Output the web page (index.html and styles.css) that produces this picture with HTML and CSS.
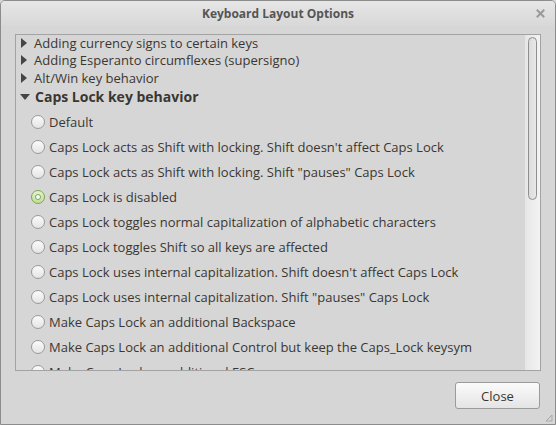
FILE: index.html
```html
<!DOCTYPE html>
<html>
<head>
<meta charset="utf-8">
<link rel="stylesheet" href="styles.css">
</head>
<body>
<div class="window">
  <div class="titlebar">
    <span class="title">Keyboard Layout Options</span>
    <svg class="close-x" width="9" height="9" viewBox="0 0 9 9"><path d="M1.5 1.5 L7.5 7.5 M7.5 1.5 L1.5 7.5" stroke="#9a9a9a" stroke-width="2" stroke-linecap="square"/></svg>
  </div>
  <div class="content">
    <div class="tree">
      <div class="rows">
        <div class="row group"><span class="tri right"></span>Adding currency signs to certain keys</div>
        <div class="row group"><span class="tri right"></span>Adding Esperanto circumflexes (supersigno)</div>
        <div class="row group"><span class="tri right"></span>Alt/Win key behavior</div>
        <div class="row header"><span class="tri down"></span>Caps Lock key behavior</div>
        <div class="row opt"><span class="radio"></span>Default</div>
        <div class="row opt"><span class="radio"></span>Caps Lock acts as Shift with locking. Shift doesn't affect Caps Lock</div>
        <div class="row opt"><span class="radio"></span>Caps Lock acts as Shift with locking. Shift "pauses" Caps Lock</div>
        <div class="row opt"><span class="radio on"></span>Caps Lock is disabled</div>
        <div class="row opt"><span class="radio"></span>Caps Lock toggles normal capitalization of alphabetic characters</div>
        <div class="row opt"><span class="radio"></span>Caps Lock toggles Shift so all keys are affected</div>
        <div class="row opt"><span class="radio"></span>Caps Lock uses internal capitalization. Shift doesn't affect Caps Lock</div>
        <div class="row opt"><span class="radio"></span>Caps Lock uses internal capitalization. Shift "pauses" Caps Lock</div>
        <div class="row opt"><span class="radio"></span>Make Caps Lock an additional Backspace</div>
        <div class="row opt"><span class="radio"></span>Make Caps Lock an additional Control but keep the Caps_Lock keysym</div>
        <div class="row opt"><span class="radio"></span>Make Caps Lock an additional ESC</div>
      </div>
      <div class="scrollbar"><div class="slider"></div></div>
    </div>
    <div class="actions">
      <button class="btn">Close</button>
    </div>
  </div>
  <svg class="grip" width="8" height="8" viewBox="0 0 8 8"><path d="M7 1 L7 7 L1 7 Z" fill="none" stroke="#a8a8a8" stroke-width="1"/></svg>
</div>
</body>
</html>
```
FILE: styles.css
```css
* { box-sizing: border-box; }
html, body { margin: 0; padding: 0; background: #d6d6d6; }
body { font-family: "Open Sans", "Noto Sans", sans-serif; color: #3b3632; }
.window {
  position: relative;
  width: 556px; height: 425px;
  border: 1px solid #8c8c8c;
  border-radius: 5px 5px 0 0;
  background: #d6d6d6;
  display: flex; flex-direction: column;
  overflow: hidden;
}
.titlebar {
  position: relative;
  height: 25px; flex: none;
  background: linear-gradient(#e6e6e6, #d8d8d8);
  display: flex; align-items: center; justify-content: center;
}
.title { font-weight: bold; font-size: 12px; color: #555555; }
.close-x { position: absolute; right: 10px; top: 8px; }
.content { flex: 1; display: flex; flex-direction: column; padding: 8px 14px 0 14px; }
.tree {
  height: 337px;
  border: 1px solid #a3a3a3;
  display: flex;
  overflow: hidden;
  background: #d6d6d6;
}
.rows { flex: 1; overflow: hidden; padding-left: 3px; }
.row { display: flex; align-items: center; font-size: 13px; white-space: nowrap; }
.row.group { height: 17.3px; }
.row.group:first-child { height: 16.8px; }
.row.header { height: 23.5px; font-weight: bold; font-size: 14px; padding-bottom: 3px; }
.row.opt { height: 25px; padding-left: 13px; }
.tri { width: 0; height: 0; }
.tri.right { border-top: 5px solid transparent; border-bottom: 5px solid transparent; border-left: 6px solid #454545; margin-left: 2px; margin-right: 7px; }
.tri.down { border-left: 5px solid transparent; border-right: 5px solid transparent; border-top: 6px solid #454545; margin-left: 1px; margin-right: 5px; }
.radio {
  width: 14px; height: 14px; border-radius: 50%;
  border: 1px solid #9a9a9a;
  background: linear-gradient(#fbfbfb, #e4e4e4);
  margin-left: -1px; margin-right: 4px; flex: none;
  position: relative;
}
.radio.on { border-color: #7aa74a; background: linear-gradient(#e4f2cf, #c2dc9c); }
.radio.on::after {
  content: ""; position: absolute; left: 3px; top: 3px;
  width: 6px; height: 6px; border-radius: 50%;
  background: #fafafa; border: 1px solid #7ea65a; box-sizing: border-box;
}
.scrollbar {
  width: 15px; flex: none;
  background: linear-gradient(90deg, #e6e6e6, #f3f3f3);
  padding: 2px 3px 0 3px;
}
.slider {
  width: 9px; height: 163px;
  border: 1px solid #8e8e8e;
  border-radius: 5px;
  background: linear-gradient(90deg, #dcdcdc, #e8e8e8);
}
.actions { display: flex; justify-content: flex-end; padding-top: 11px; }
.btn {
  width: 85px; height: 27px;
  border: 1px solid #9b9b9b; border-radius: 3px;
  background: linear-gradient(#fbfbfb, #e4e4e4);
  font-family: "Open Sans", "Noto Sans", sans-serif;
  font-size: 13px; color: #3b3632;
  padding: 0; margin-right: 1px;
}
.grip { position: absolute; right: 2px; bottom: 2px; }
```
